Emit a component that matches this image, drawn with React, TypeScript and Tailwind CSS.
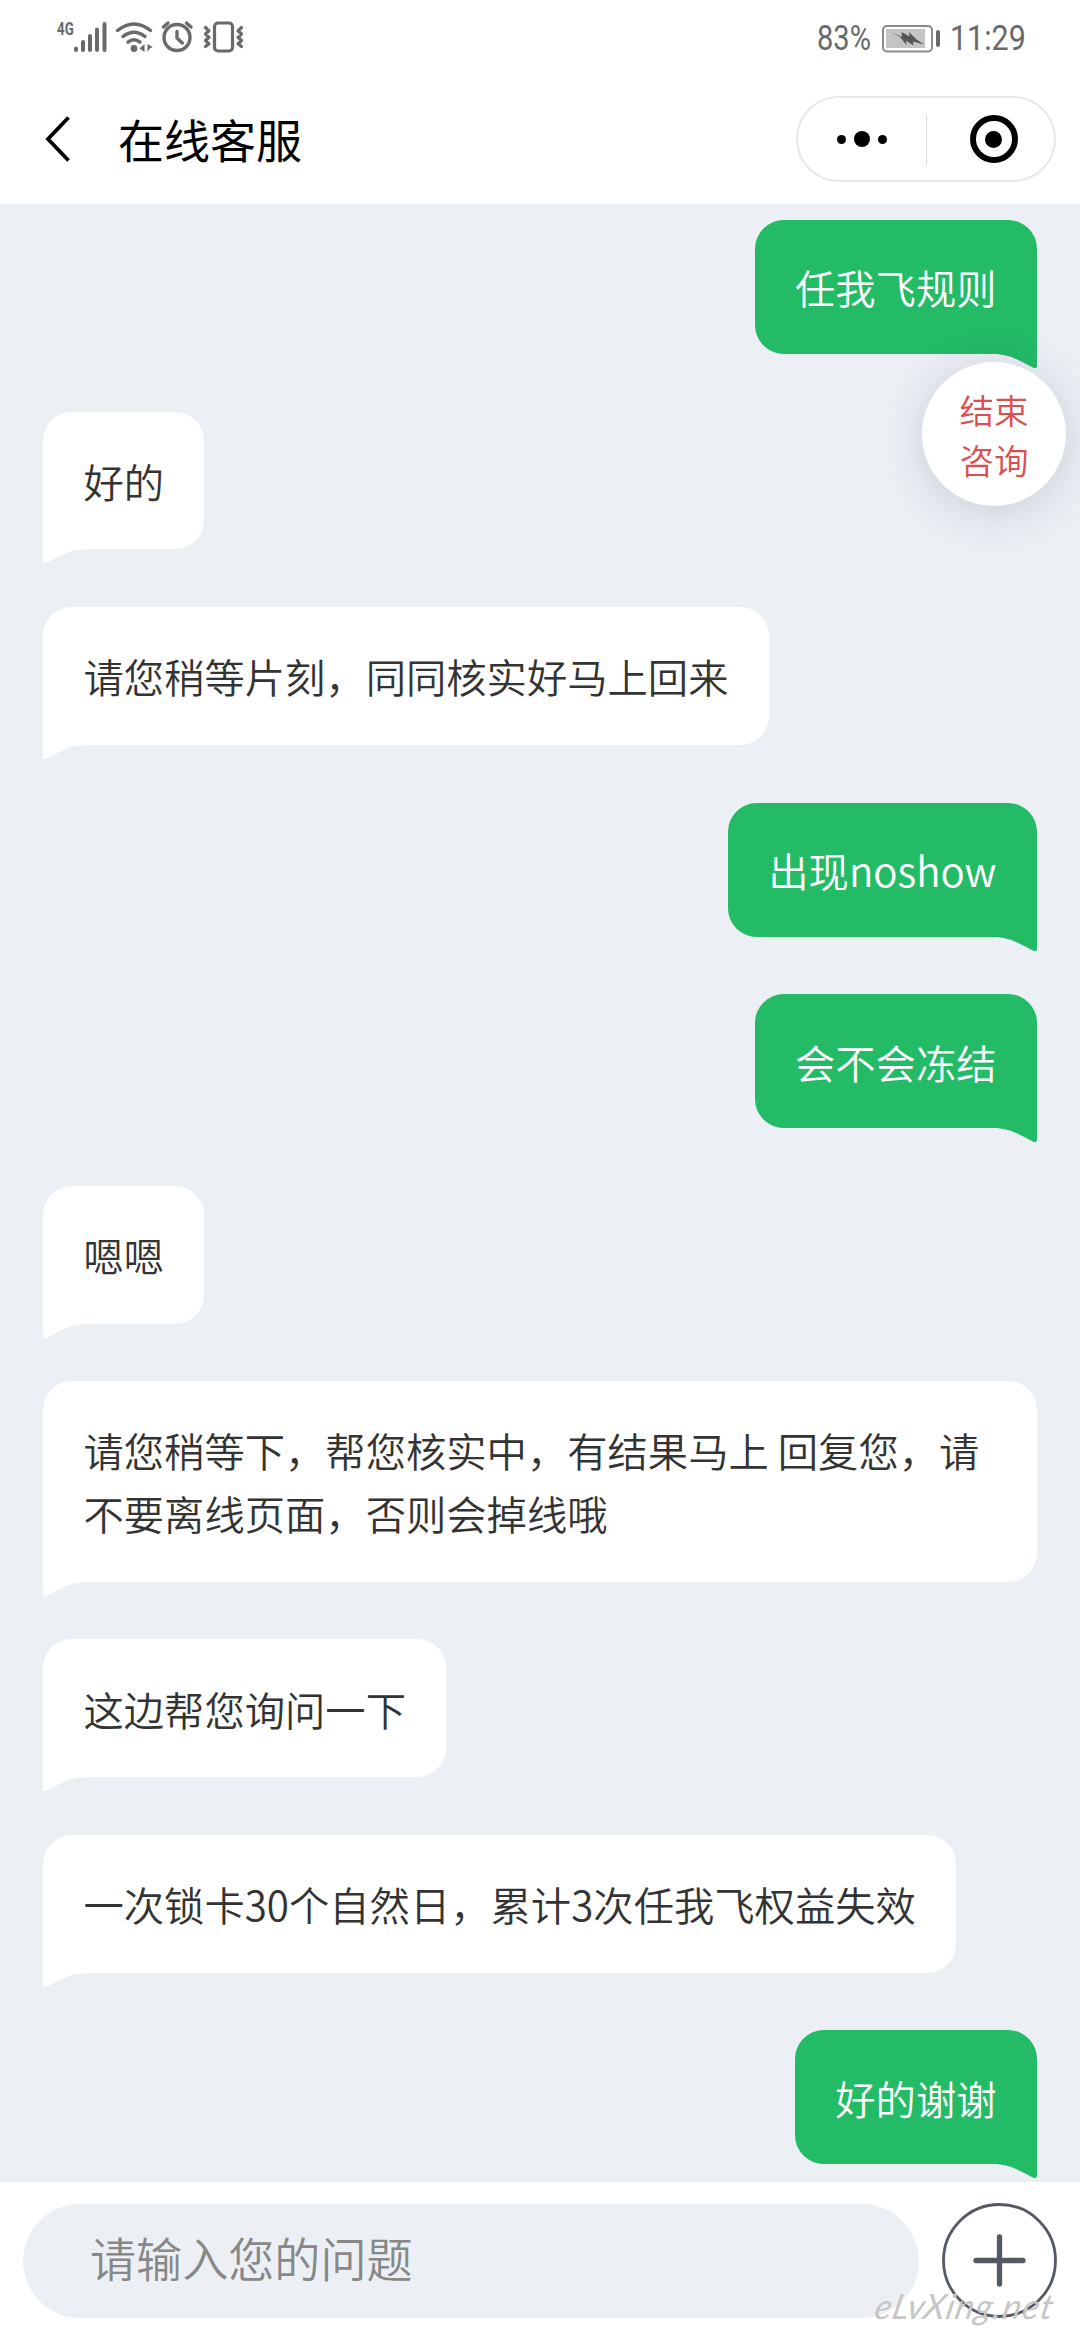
import clsx from "clsx";

type Message = {
  id: number;
  from: "agent" | "me";
  text: string;
};

const messages: Message[] = [
  { id: 1, from: "me", text: "任我飞规则" },
  { id: 2, from: "agent", text: "好的" },
  { id: 3, from: "agent", text: "请您稍等片刻，同同核实好马上回来" },
  { id: 4, from: "me", text: "出现noshow" },
  { id: 5, from: "me", text: "会不会冻结" },
  { id: 6, from: "agent", text: "嗯嗯" },
  { id: 7, from: "agent", text: "请您稍等下，帮您核实中，有结果马上 回复您，请不要离线页面，否则会掉线哦" },
  { id: 8, from: "agent", text: "这边帮您询问一下" },
  { id: 9, from: "agent", text: "一次锁卡30个自然日，累计3次任我飞权益失效" },
  { id: 10, from: "me", text: "好的谢谢" },
];

function StatusIcons() {
  return (
    <svg width="190" height="36" viewBox="56 20 190 36" fill="none" stroke="#696969" strokeLinecap="round">
      {/* signal */}
      <g strokeWidth="4">
        <path d="M76 48.500v1.500M83 42v8M90 36v14M97 29.500v20.500M104.500 24v26" />
      </g>
      {/* wifi */}
      <g strokeWidth="3.400">
        <path d="M117.500 30.500Q134 17.500 150.500 30.500" />
        <path d="M123 36.500Q134 28 145 36.500" />
        <path d="M128 42.200Q134 37.500 140 42.200" />
      </g>
      <circle cx="134" cy="48.500" r="3.400" fill="#696969" stroke="none" />
      <path d="M139.500 48.500l5-4.500v8zM147.500 44l5.200 3.200-2.700 1-2.500 3.800z" fill="#696969" stroke="none" />
      {/* alarm */}
      <g strokeWidth="3.400" strokeLinejoin="round">
        <circle cx="177" cy="37.500" r="13" />
        <path d="M177 31.500v6.500l5.300 5M163.500 27l4.500-4M186.500 23l4.500 4" />
      </g>
      {/* vibrate */}
      <g strokeWidth="3.200" strokeLinejoin="round">
        <rect x="214.500" y="23" width="18" height="28" rx="3.500" />
        <path d="M205.500 27.500l3.500 3.300-3.500 3.200 3.500 3.300-3.500 3.200 3.500 3.300-3.500 2.700M241.500 27.500l-3.500 3.300 3.500 3.200-3.500 3.300 3.500 3.200-3.500 3.300 3.500 2.700" />
      </g>
    </svg>
  );
}

function Battery() {
  return (
    <svg width="60" height="30" viewBox="880 23 60 30" fill="none">
      <rect x="882" y="25" width="49" height="25.500" rx="4" stroke="#8a8a8a" strokeWidth="2" />
      <rect x="885" y="28" width="39" height="19" fill="#c4c4c4" />
      <path d="M890 31l11 5-.5-5 8 4.500-.5-4.500 7 7 8 5.500-11-3 .500 4-7.500-5 .5 4.500-6.500-8z" fill="#555" />
      <rect x="935" y="29" width="4" height="17" rx="2" fill="#696969" />
    </svg>
  );
}

function StatusBar() {
  return (
    <div className="flex h-[74px] items-start justify-between pl-14 pr-[55px] text-[#696969]">
      <div className="relative mt-5">
        <StatusIcons />
        <span className="absolute left-px top-0 origin-left scale-x-[.7] font-[Roboto] text-[19px] leading-[18px] font-bold">
          4G
        </span>
      </div>
      <div className="mt-[19px] flex items-center font-[Roboto] text-[35px] leading-10 font-normal">
        <span className="w-[64px] origin-left scale-x-[.83]">83%</span>
        <Battery />
        <span className="ml-[9px] w-[75px] origin-left scale-x-[.87]">11:29</span>
      </div>
    </div>
  );
}

function NavBar() {
  return (
    <header className="flex h-[130px] items-center pl-[44px] pr-[24px]">
      <svg width="28" height="48" viewBox="0 0 28 48" fill="none" stroke="#000" strokeWidth="3.800">
        <path d="M24.500 2.500L4 24l20.500 21.500" />
      </svg>
      <h1 className="ml-[46px] flex-1 pb-[2px] text-[46px] leading-[60px] font-normal text-black">在线客服</h1>
      <div className="flex h-[86px] w-[260px] items-center rounded-full border-2 border-[#e8e8e8]">
        <div className="flex w-[128px] items-center justify-center gap-2">
          <span className="h-[9px] w-[9px] rounded-full bg-black" />
          <span className="h-4 w-4 rounded-full bg-black" />
          <span className="h-[9px] w-[9px] rounded-full bg-black" />
        </div>
        <div className="h-[51px] w-px bg-[#dcdcdc]" />
        <div className="flex flex-1 justify-center pl-[6px]">
          <div className="flex h-12 w-12 items-center justify-center rounded-full border-[6px] border-black">
            <span className="h-[17px] w-[17px] rounded-full bg-black" />
          </div>
        </div>
      </div>
    </header>
  );
}

function Bubble({ message }: { message: Message }) {
  const mine = message.from === "me";

  return (
    <div className={clsx("flex", mine ? "justify-end" : "justify-start")}>
      <div
        className={clsx(
          "relative rounded-[28.8px] px-[40.3px] text-[40.32px] leading-[62.7px]",
          mine
            ? "rounded-br-none bg-[#24bb67] pt-[36.4px] pb-[34.900px] text-white"
            : "rounded-bl-none bg-white pt-[38.200px] pb-[37px] text-[#333333]",
        )}
      >
        {message.text}
        <svg
          width="46"
          height="16"
          viewBox="0 0 46 16"
          className={clsx(
            "absolute top-[calc(100%-1px)]",
            mine ? "right-0 text-[#24bb67]" : "left-0 -scale-x-100 text-white",
          )}
        >
          <path d="M0 0H46V13Q46 16 42.500 14.700C34 11 21 1 2 1H0z" fill="currentColor" />
        </svg>
      </div>
    </div>
  );
}

function InputBar() {
  return (
    <footer className="relative flex h-[158px] items-start bg-white pl-[23px] pr-[23px] pt-[21px]">
      <div className="mt-px flex h-[114px] w-[896px] items-center rounded-full bg-[#ecf0f5] pl-[67px] pb-[7px] text-[46.08px] text-[#888888]">
        请输入您的问题
      </div>
      <button type="button" className="ml-[23px]">
        <svg width="115" height="115" viewBox="0 0 115 115" fill="none" stroke="#555a62">
          <circle cx="57.500" cy="57.500" r="56" strokeWidth="2.800" />
          <path d="M57.500 34v47M34 57.500h47" strokeWidth="5.300" strokeLinecap="round" />
        </svg>
      </button>
      <span className="absolute left-[876px] top-[100px] -skew-x-12 font-[Lato] text-[35px] leading-[46px] font-normal tracking-[1.2px] text-[#c6c6c6] italic">
        eLvXing.net
      </span>
    </footer>
  );
}

export default function App() {
  return (
    <div className="relative flex h-[2340px] w-[1080px] flex-col overflow-hidden bg-white font-['Noto_Sans_CJK_SC',sans-serif] font-[350]">
      <StatusBar />
      <NavBar />
      <main className="flex h-[1978px] flex-col gap-[57.600px] bg-[#ecf0f5] px-[43.200px] pt-4">
        {messages.map((message) => (
          <Bubble key={message.id} message={message} />
        ))}
      </main>
      <InputBar />
      <button
        type="button"
        className="absolute left-[922px] top-[362px] flex h-36 w-36 items-center justify-center rounded-full bg-white px-9 text-[34.56px] leading-[50px] text-[#dc4f4f] shadow-[0_6px_44px_rgba(40,40,80,0.18)]"
      >
        结束
        <br />
        咨询
      </button>
    </div>
  );
}
